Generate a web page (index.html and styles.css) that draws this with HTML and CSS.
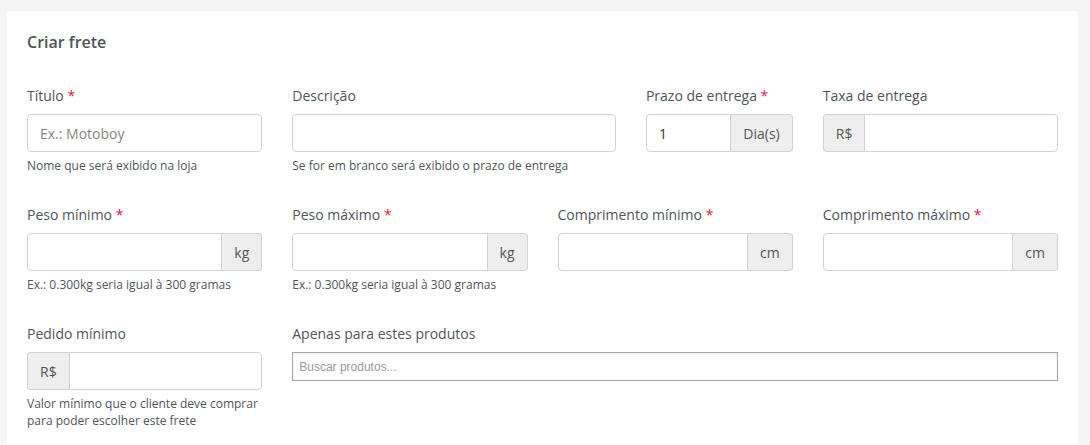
FILE: index.html
```html
<!DOCTYPE html>
<html lang="pt-BR">
<head>
    <meta charset="UTF-8">
    <title>Criar frete</title>
    <link rel="stylesheet" href="styles.css">
</head>
<body>
    <div class="card">
        <h2 class="card-title">Criar frete</h2>
        <form class="form-grid">
            <div class="form-group col-3">
                <label>Título <span class="req">*</span></label>
                <input type="text" class="form-control" placeholder="Ex.: Motoboy">
                <small class="form-text">Nome que será exibido na loja</small>
            </div>
            <div class="form-group col-4">
                <label>Descrição</label>
                <input type="text" class="form-control">
                <small class="form-text">Se for em branco será exibido o prazo de entrega</small>
            </div>
            <div class="form-group col-2">
                <label>Prazo de entrega <span class="req">*</span></label>
                <div class="input-group">
                    <input type="text" class="form-control" value="1">
                    <span class="addon">Dia(s)</span>
                </div>
            </div>
            <div class="form-group col-3">
                <label>Taxa de entrega</label>
                <div class="input-group">
                    <span class="addon">R$</span>
                    <input type="text" class="form-control">
                </div>
            </div>

            <div class="form-group col-3">
                <label>Peso mínimo <span class="req">*</span></label>
                <div class="input-group">
                    <input type="text" class="form-control">
                    <span class="addon">kg</span>
                </div>
                <small class="form-text">Ex.: 0.300kg seria igual à 300 gramas</small>
            </div>
            <div class="form-group col-3">
                <label>Peso máximo <span class="req">*</span></label>
                <div class="input-group">
                    <input type="text" class="form-control">
                    <span class="addon">kg</span>
                </div>
                <small class="form-text">Ex.: 0.300kg seria igual à 300 gramas</small>
            </div>
            <div class="form-group col-3">
                <label>Comprimento mínimo <span class="req">*</span></label>
                <div class="input-group">
                    <input type="text" class="form-control">
                    <span class="addon">cm</span>
                </div>
            </div>
            <div class="form-group col-3">
                <label>Comprimento máximo <span class="req">*</span></label>
                <div class="input-group">
                    <input type="text" class="form-control">
                    <span class="addon">cm</span>
                </div>
            </div>

            <div class="form-group col-3">
                <label>Pedido mínimo</label>
                <div class="input-group">
                    <span class="addon">R$</span>
                    <input type="text" class="form-control">
                </div>
                <small class="form-text">Valor mínimo que o cliente deve comprar para poder escolher este frete</small>
            </div>
            <div class="form-group col-9">
                <label>Apenas para estes produtos</label>
                <input type="text" class="search-box" placeholder="Buscar produtos...">
            </div>
        </form>
    </div>
</body>
</html>
```

FILE: styles.css
```css
:root {
    --page-bg: #f5f5f7;
    --text-color: #50555c;
    --border-color: #d2d2d2;
    --addon-bg: #eeeeee;
    --required-color: #e5173f;
}

* {
    box-sizing: border-box;
}

body {
    margin: 0;
    padding: 11px 12px 0 7px;
    background-color: var(--page-bg);
    font-family: "Open Sans", Arial, sans-serif;
    color: var(--text-color);
}

.card {
    background: #fff;
    border-radius: 4px 4px 0 0;
    padding: 20px 20px 16px;
}

.card-title {
    margin: 0 0 32px;
    font-size: 16px;
    font-weight: 600;
    line-height: 22px;
    color: #4f545b;
}

.form-grid {
    display: grid;
    grid-template-columns: repeat(12, 1fr);
    column-gap: 30px;
    row-gap: 30px;
    align-items: start;
}

.col-2 { grid-column: span 2; }
.col-3 { grid-column: span 3; }
.col-4 { grid-column: span 4; }
.col-9 { grid-column: span 9; }

.form-group label {
    display: block;
    margin-bottom: 8px;
    font-size: 14px;
    line-height: 21px;
}

.req {
    color: var(--required-color);
}

.form-control {
    display: block;
    width: 100%;
    height: 38px;
    padding: 0 12px;
    border: 1px solid var(--border-color);
    border-radius: 4px;
    background: #fff;
    font-family: inherit;
    font-size: 14px;
    color: #333;
    outline: none;
}

.form-control::placeholder {
    color: #858585;
}

.input-group {
    display: flex;
}

.input-group .form-control {
    flex: 1;
    min-width: 0;
}

.addon {
    display: flex;
    align-items: center;
    height: 38px;
    padding: 0 12px;
    background: var(--addon-bg);
    border: 1px solid var(--border-color);
    font-size: 14px;
    color: #555;
}

.input-group .form-control:first-child {
    border-top-right-radius: 0;
    border-bottom-right-radius: 0;
}

.input-group .form-control:last-child {
    border-top-left-radius: 0;
    border-bottom-left-radius: 0;
}

.input-group .form-control + .addon {
    border-left: 0;
    border-radius: 0 4px 4px 0;
}

.addon:first-child {
    border-right: 0;
    border-radius: 4px 0 0 4px;
}

.form-text {
    display: block;
    margin-top: 5px;
    font-size: 12px;
    line-height: 17px;
    color: #50555c;
}

.search-box {
    display: block;
    width: 100%;
    height: 29px;
    padding: 0 6px;
    border: 1px solid #a6a6a6;
    box-shadow: inset 0 2px 3px rgba(0, 0, 0, 0.06);
    font-family: "Liberation Sans", Arial, sans-serif;
    font-size: 12px;
    outline: none;
}

.search-box::placeholder {
    color: #9a9a9a;
}
```
